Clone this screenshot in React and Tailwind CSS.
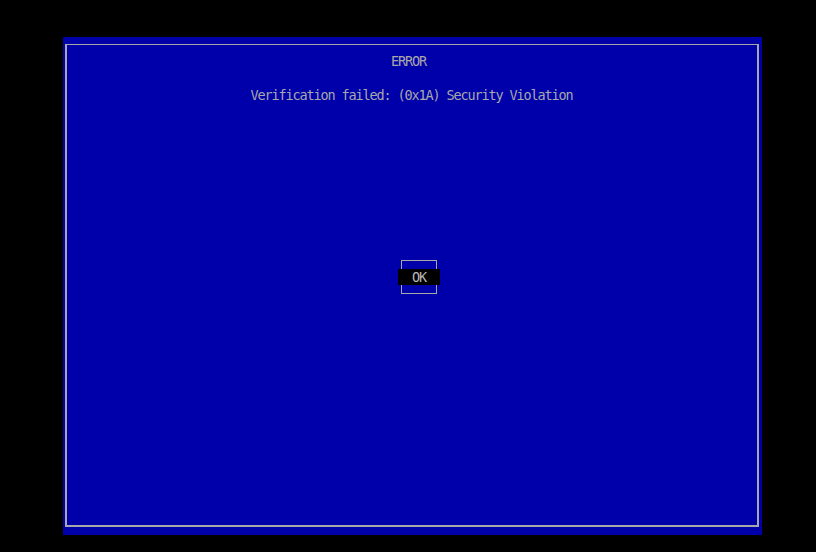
export default function App() {
  return (
    <div className="h-[552px] w-[816px] overflow-hidden bg-black pl-[63px] pt-[37px] font-['DejaVu_Sans_Mono','Liberation_Mono',monospace] text-[13.5px] leading-[16px] tracking-[-1.13px] text-[#a8a8a8]">
      <div className="flex h-[498px] w-[699px] bg-[#0000aa] pb-[8px] pl-[2px] pr-[3px] pt-[7px]">
        <div className="flex flex-1 flex-col items-center border-2 border-t border-[#a8a8a8]">
          {/* title */}
          <div className="mr-[7px] mt-[8px]">ERROR</div>

          {/* message */}
          <div className="mr-[1px] mt-[18px] whitespace-pre">
            Verification failed: (0x1A) Security Violation
          </div>

          {/* button */}
          <div className="ml-[14px] mt-[157px] flex h-[34px] w-[36px] items-center justify-center border border-[#a8a8a8]">
            <span className="flex h-[16px] w-[42px] shrink-0 items-center justify-center bg-black text-[#b8b8b8]">
              OK
            </span>
          </div>
        </div>
      </div>
    </div>
  )
}
